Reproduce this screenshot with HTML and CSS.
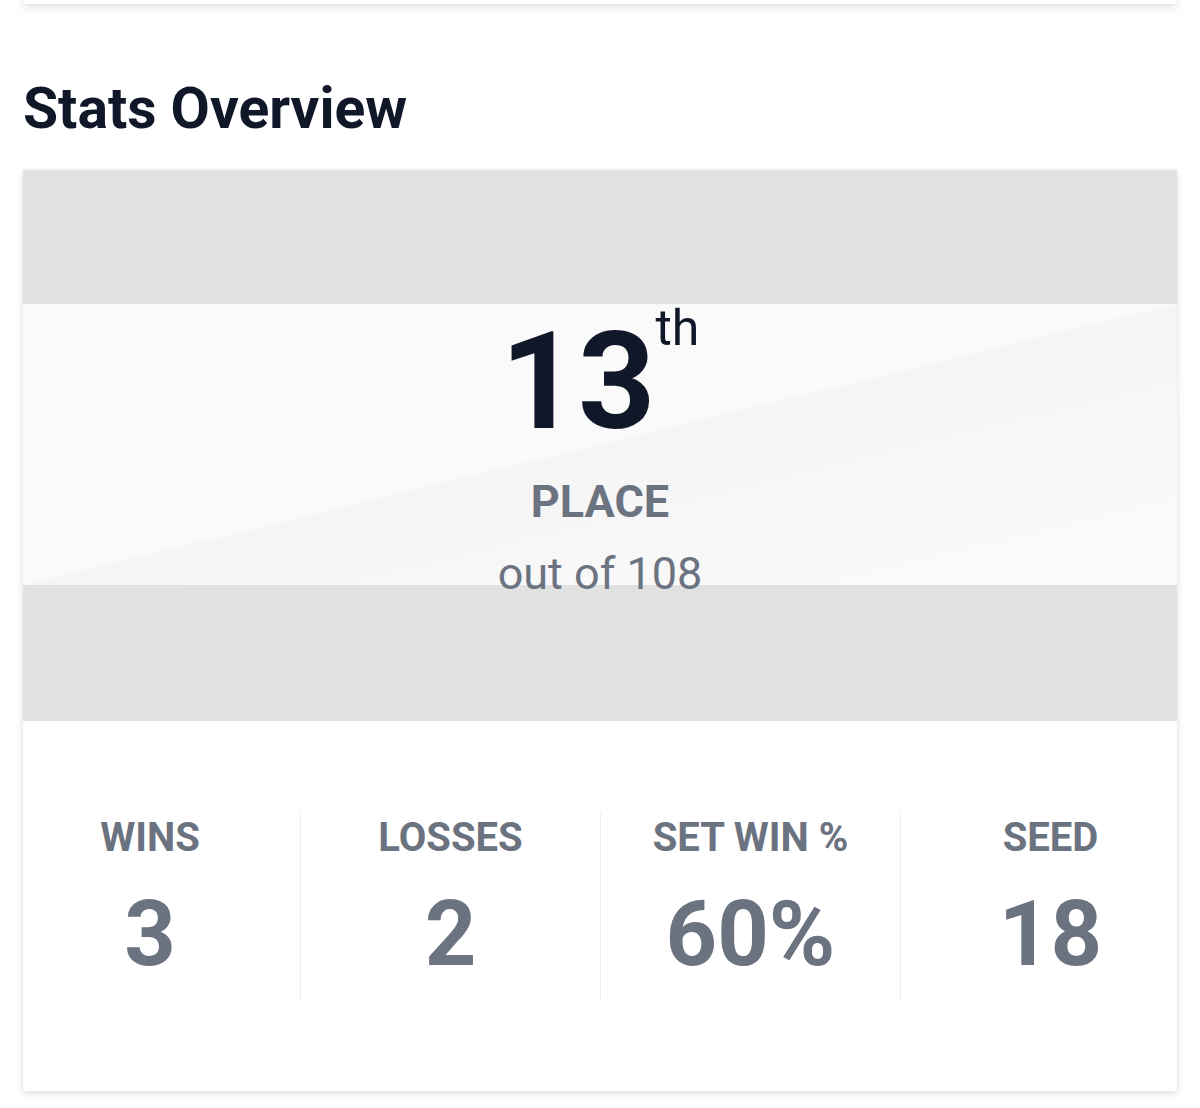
FILE: index.html
```html
<!DOCTYPE html>
<html lang="en">
<head>
<meta charset="utf-8">
<title>Stats Overview</title>
<link rel="stylesheet" href="styles.css">
</head>
<body>
<div class="prev-card"></div>
<h2 class="section-title">Stats Overview</h2>
<section class="stats-card">
  <div class="hero">
    <div class="rank">
      <span class="rank-num">13</span><span class="rank-sup">th</span>
    </div>
    <div class="rank-label">PLACE</div>
    <div class="rank-total">out of 108</div>
  </div>
  <div class="stats-body">
    <div class="stats-row">
      <div class="stat">
        <div class="stat-label">WINS</div>
        <div class="stat-value">3</div>
      </div>
      <div class="stat">
        <div class="stat-label">LOSSES</div>
        <div class="stat-value">2</div>
      </div>
      <div class="stat">
        <div class="stat-label">SET WIN %</div>
        <div class="stat-value">60%</div>
      </div>
      <div class="stat">
        <div class="stat-label">SEED</div>
        <div class="stat-value">18</div>
      </div>
    </div>
  </div>
</section>
</body>
</html>
```
FILE: styles.css
```css
* { box-sizing: border-box; }
html, body {
  margin: 0;
  padding: 0;
  background: #ffffff;
  font-family: Roboto, "Liberation Sans", Arial, sans-serif;
}
body {
  overflow: hidden;
  height: 1108px;
}
.prev-card {
  margin: -20px 23px 0;
  height: 24px;
  background: #ffffff;
  box-shadow: 0 3px 8px rgba(0, 0, 0, 0.13);
  border-radius: 0 0 3px 3px;
}
.section-title {
  margin: 72px 23px 28px;
  font-size: 57px;
  line-height: 66px;
  font-weight: 700;
  color: #0f1729;
}
.stats-card {
  margin: 0 23px;
  background: #ffffff;
  box-shadow: 0 2px 7px rgba(0, 0, 0, 0.14);
}
.hero {
  height: 551px;
  padding-top: 133px;
  display: flex;
  flex-direction: column;
  align-items: center;
  border-bottom: 1px solid #dcdce3;
  background-color: #e1e1e1;
  background-image: linear-gradient(to bottom right, #fafafa 0, #fafafa 49.5%, #f5f5f5 50.5%, #fbfbfb 100%);
  background-size: 100% 281px;
  background-position: 0 134px;
  background-repeat: no-repeat;
}
.rank {
  display: flex;
  align-items: flex-start;
  color: #0f1729;
}
.rank-num {
  margin-top: 12px;
  font-size: 135px;
  line-height: 135px;
  font-weight: 700;
}
.rank-sup {
  font-size: 50px;
  line-height: 50px;
  font-weight: 400;
}
.rank-label {
  margin-top: 26px;
  font-size: 45px;
  line-height: 52px;
  font-weight: 700;
  color: #6b7280;
}
.rank-total {
  margin-top: 20px;
  font-size: 45px;
  line-height: 52px;
  font-weight: 400;
  color: #6b7280;
}
.stats-body {
  padding: 91px 0 89px;
}
.stats-row {
  display: grid;
  grid-template-columns: repeat(4, 1fr);
  margin: 0 -23px;
}
.stat {
  height: 190px;
  padding-top: 2px;
  display: flex;
  flex-direction: column;
  align-items: center;
  color: #6b7280;
}
.stat + .stat {
  border-left: 1px solid #eef0f3;
}
.stat-label {
  font-size: 40px;
  line-height: 48px;
  font-weight: 700;
}
.stat-value {
  margin-top: 28px;
  font-size: 90px;
  line-height: 90px;
  font-weight: 700;
}
```
